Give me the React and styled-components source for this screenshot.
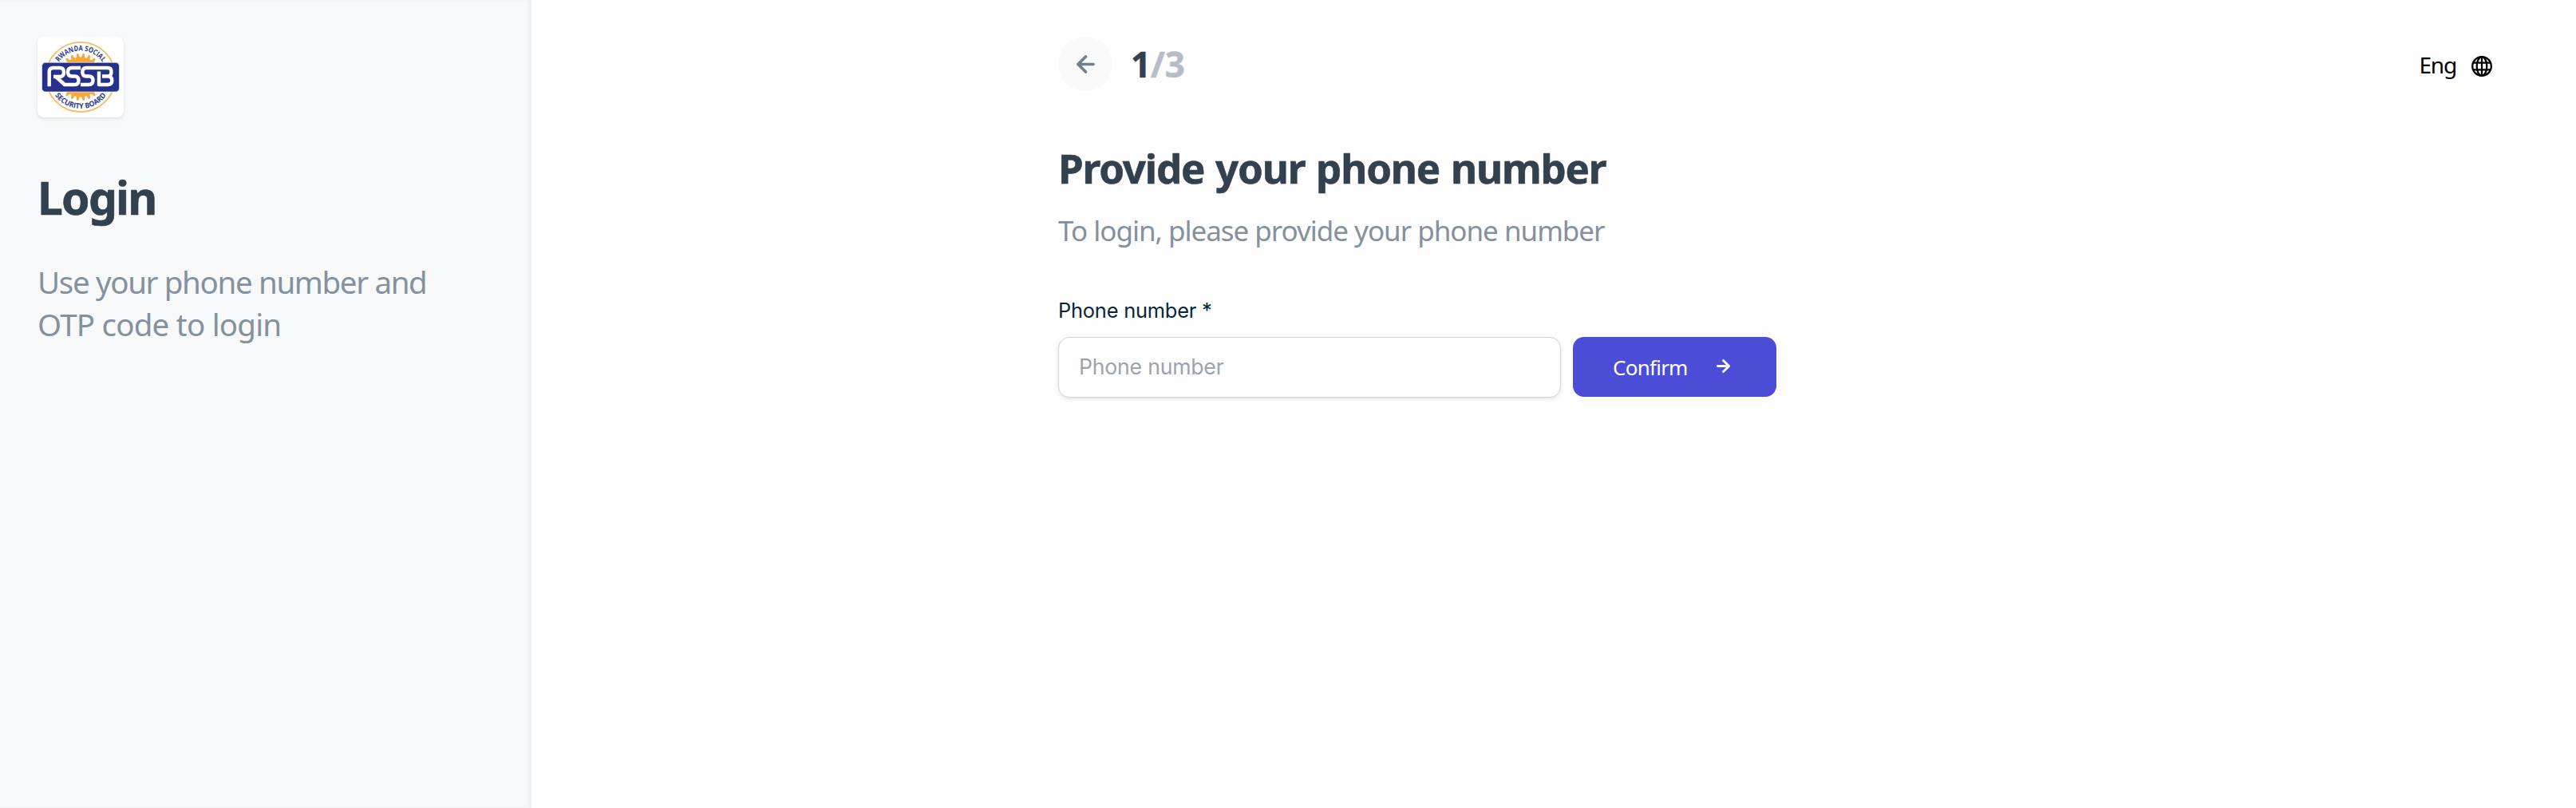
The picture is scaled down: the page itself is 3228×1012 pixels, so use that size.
import React from "react";
import styled, { createGlobalStyle } from "styled-components";

const Global = createGlobalStyle`
  *, *::before, *::after { box-sizing: border-box; }
  body { margin: 0; background: #fefefe; font-family: "Noto Sans", "Open Sans", sans-serif; }
  h1, h2, p { margin: 0; }
`;

const Page = styled.div`
  display: flex;
  width: 100%;
  height: 1012px;
  overflow: hidden;
`;

const Sidebar = styled.aside`
  flex: 0 0 666px;
  background: #f8f9fb;
  box-shadow: inset -4px 0 5px -1px rgba(0, 0, 0, 0.045);
  padding: 46px 47px;
`;

const LogoCard = styled.div`
  width: 108px;
  height: 101px;
  border-radius: 8px;
  background: #fff;
  box-shadow: 0 2px 4px rgba(0, 0, 0, 0.1);
  svg { display: block; }
`;

const SideTitle = styled.h1`
  margin-top: 61px;
  font-size: 57px;
  line-height: 78px;
  font-weight: 700;
  letter-spacing: -1.8px;
  color: #33414e;
  -webkit-text-stroke: 0.6px #33414e;
`;

const SideText = styled.p`
  margin-top: 41px;
  font-size: 38.5px;
  line-height: 53px;
  color: #84919e;
  white-space: nowrap;
`;

const SideLine = styled.span`
  display: block;
  letter-spacing: ${(p) => p.$tracking}px;
`;

const Main = styled.main`
  flex: 1;
  display: flex;
  justify-content: space-between;
  align-items: flex-start;
  padding: 46px 105px 0 660px;
`;

const Content = styled.section`
  width: 900px;
`;

const Steps = styled.div`
  display: flex;
  align-items: center;
  gap: 23px;
  height: 68px;
`;

const BackButton = styled.button`
  display: grid;
  place-items: center;
  width: 68px;
  height: 68px;
  border: 0;
  padding: 0;
  border-radius: 50%;
  background: #f9f9f9;
`;

const StepCount = styled.div`
  font-size: 44px;
  line-height: 60px;
  font-weight: 700;
  letter-spacing: -0.4px;
  color: #33414e;
  -webkit-text-stroke: 0.5px currentColor;
  span { color: #b6bdc6; -webkit-text-stroke: 0.5px #b6bdc6; }
`;

const Title = styled.h2`
  margin-top: 62px;
  font-size: 51px;
  line-height: 68px;
  font-weight: 700;
  letter-spacing: -1.15px;
  word-spacing: 1.6px;
  color: #33414e;
  -webkit-text-stroke: 0.6px #33414e;
  white-space: nowrap;
`;

const Subtitle = styled.p`
  margin-top: 21px;
  font-size: 35px;
  line-height: 48px;
  letter-spacing: -1.02px;
  color: #84919e;
  white-space: nowrap;
`;

const Label = styled.label`
  display: block;
  margin-top: 60px;
  font-family: Inter, sans-serif;
  font-size: 25.4px;
  line-height: 32px;
  letter-spacing: -0.2px;
  color: #06263a;
`;

const FormRow = styled.div`
  display: flex;
  gap: 15px;
  margin-top: 17px;
`;

const Input = styled.input`
  width: 630px;
  height: 76px;
  padding: 0 25px 2px;
  border: 1px solid #d1d5e0;
  border-radius: 14px;
  background: #fefefe;
  box-shadow: 0 2px 4px rgba(0, 0, 0, 0.1);
  font-family: Inter, sans-serif;
  font-size: 26.6px;
  letter-spacing: -0.2px;
  &::placeholder { color: #9ca3af; opacity: 1; }
`;

const Confirm = styled.button`
  display: flex;
  align-items: center;
  justify-content: space-between;
  width: 255px;
  height: 75px;
  padding: 0 58px 0 50px;
  border: 0;
  border-radius: 14px;
  background: #4b4dd6;
  color: #fff;
  font-family: "Noto Sans", sans-serif;
  font-size: 26px;
  letter-spacing: -0.75px;
  svg { margin-bottom: 2px; }
`;

const Language = styled.div`
  display: flex;
  align-items: center;
  gap: 19px;
  height: 70px;
  font-size: 28px;
  letter-spacing: -1.2px;
  color: #000;
  svg { margin-top: 3px; }
`;

const Arrow = ({ size, width, color, flip }) => (
  <svg width={size} height={size} viewBox="0 0 24 24" fill="none" stroke={color}
    strokeWidth={width} strokeLinecap="round" strokeLinejoin="round">
    <path d={flip ? "M22 12H2M12 2L2 12L12 22" : "M2 12H22M12 2L22 12L12 22"} />
  </svg>
);

const Globe = () => (
  <svg width="26" height="26" viewBox="0 0 26 26" fill="none" stroke="#000" strokeWidth="2.3">
    <circle cx="13" cy="13" r="11.8" />
    <ellipse cx="13" cy="13" rx="6.3" ry="11.8" />
    <path d="M13 1V25M2.5 8.7H23.5M2.5 17.3H23.5" />
  </svg>
);

const rays = Array.from({ length: 24 }, (_, i) => i * 15);

const Logo = () => (
  <svg width="108" height="101" viewBox="0 0 108 101">
    <defs>
      <path id="arcTop" d="M21 50.5A33 33 0 0 1 87 50.5" />
      <path id="arcBottom" d="M14.5 50.5A39.5 39.5 0 0 0 93.5 50.5" />
    </defs>
    <circle cx="54" cy="50.5" r="43.6" fill="#fff" stroke="#f6bb62" strokeWidth="1.8" />
    <circle cx="54" cy="50.5" r="25" fill="#f5a93c" />
    {rays.map((a) => (
      <path key={a} d="M50.700 30L53 21H55L57.300 30Z" fill="#f5a93c" transform={`rotate(${a + 7.5} 54 50.5)`} />
    ))}
    <g fill="#2b3a8c" fontFamily="Open Sans" fontWeight="700" fontSize="9.2" textAnchor="middle">
      <text><textPath href="#arcTop" startOffset="50%" textLength="64" lengthAdjust="spacingAndGlyphs">RWANDA SOCIAL</textPath></text>
      <text><textPath href="#arcBottom" startOffset="50%" textLength="75" lengthAdjust="spacingAndGlyphs">SECURITY BOARD</textPath></text>
    </g>
    <rect x="5.5" y="32.3" width="97" height="36.700" rx="4.5" fill="#26318c" stroke="#fff" strokeWidth="0.6" />
    <g fill="none" stroke="#fff" strokeWidth="4.4" strokeLinejoin="round">
      <path d="M14.700 62.200V44Q14.700 39 19.700 39H28Q33 39 33 44.500Q33 50 28 50H20M23 50L34 60H47Q51.500 60 51.500 55Q51.500 49.500 46.500 49.500H43Q38 49.500 38 44.300Q38 39 43 39H54" />
      <path d="M54 60H64Q69.500 60 69.500 55Q69.500 49.500 64.500 49.500H61Q56.300 49.500 56.300 44.300Q56.300 39 61 39H88Q92.500 39 92.500 44Q92.500 49.500 88 49.500H81M88 49.500Q93.300 49.500 93.300 55Q93.300 60 88 60H77V43.500" />
    </g>
  </svg>
);

export default function App() {
  return (
    <Page>
      <Global />
      <Sidebar>
        <LogoCard><Logo /></LogoCard>
        <SideTitle>Login</SideTitle>
        <SideText>
          <SideLine $tracking={-1.35}>Use your phone number and</SideLine>
          <SideLine $tracking={-0.78}>OTP code to login</SideLine>
        </SideText>
      </Sidebar>
      <Main>
        <Content>
          <Steps>
            <BackButton aria-label="Back"><Arrow flip size={23} width={3.8} color="#71808a" /></BackButton>
            <StepCount>1<span>/3</span></StepCount>
          </Steps>
          <Title>Provide your phone number</Title>
          <Subtitle>To login, please provide your phone number</Subtitle>
          <Label htmlFor="phone">Phone number *</Label>
          <FormRow>
            <Input id="phone" placeholder="Phone number" />
            <Confirm>Confirm<Arrow size={17} width={3.9} color="#fff" /></Confirm>
          </FormRow>
        </Content>
        <Language>Eng<Globe /></Language>
      </Main>
    </Page>
  );
}
